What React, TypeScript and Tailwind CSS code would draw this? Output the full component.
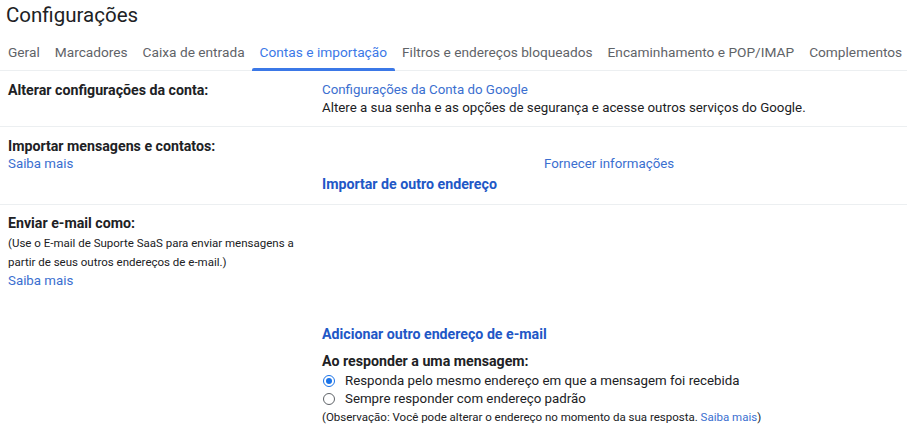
import React from "react";

const tabs = [
  "Geral",
  "Marcadores",
  "Caixa de entrada",
  "Contas e importação",
  "Filtros e endereços bloqueados",
  "Encaminhamento e POP/IMAP",
  "Complementos",
];

function Radio({ checked }: { checked: boolean }) {
  return (
    <span
      className={
        "inline-flex shrink-0 items-center justify-center w-[12px] h-[12px] rounded-full border " +
        (checked ? "border-[#1a73e8]" : "border-[#5f6368]")
      }
    >
      {checked && <span className="w-[6px] h-[6px] rounded-full bg-[#1a73e8]" />}
    </span>
  );
}

export default function App() {
  return (
    <div
      className="w-[907px] h-[427px] bg-white overflow-hidden text-[#202124]"
      style={{ fontFamily: "Roboto, 'Noto Sans', Arial, sans-serif" }}
    >
      <div className="pl-[6px] pt-[1px] h-[38px] text-[20.5px] leading-[28px] text-[#202124] font-normal whitespace-nowrap">
        Configurações
      </div>
      <div className="flex pl-[0.5px] h-[33px] border-b border-[#eceff1] whitespace-nowrap">
        {tabs.map((t) => {
          const active = t === "Contas e importação";
          return (
            <div
              key={t}
              className={
                "shrink-0 px-[7.5px] pt-[5px] text-[13.7px] leading-[18px] relative " +
                (active ? "text-[#3b78e7]" : "text-[#5f6368]")
              }
            >
              {t}
              {active && (
                <span className="absolute left-0 right-0 bottom-[-1px] h-[3px] rounded-t-[2px] bg-[#3b78e7]" />
              )}
            </div>
          );
        })}
      </div>

      {/* Row 1 */}
      <div className="flex border-b border-[#eceff1] pt-[10px] pb-[9px] text-[13.3px] leading-[18px] whitespace-nowrap">
        <div className="w-[322px] pl-[8px] font-bold text-[14.2px] text-[#202124]">Alterar configurações da conta:</div>
        <div className="flex flex-col">
          <span className="text-[#3b6fd0]">Configurações da Conta do Google</span>
          <span className="text-[#202124]">
            Altere a sua senha e as opções de segurança e acesse outros serviços do Google.
          </span>
        </div>
      </div>

      {/* Row 2 */}
      <div className="flex border-b border-[#eceff1] pt-[10px] pb-[10px] text-[13.3px] leading-[18px] whitespace-nowrap">
        <div className="w-[322px] pl-[8px] flex flex-col">
          <span className="font-bold text-[14.2px] text-[#202124]">Importar mensagens e contatos:</span>
          <span className="text-[#3b6fd0]">Saiba mais</span>
        </div>
        <div className="flex flex-col pt-[18px]">
          <span className="pl-[222px] text-[#3b6fd0]">Fornecer informações</span>
          <span className="font-bold text-[14.2px] text-[#2157c6] leading-[20px] mt-[1px]">
            Importar de outro endereço
          </span>
        </div>
      </div>

      {/* Row 3 */}
      <div className="flex pt-[9px] text-[13.3px] leading-[18px] whitespace-nowrap">
        <div className="w-[322px] pl-[8px] flex flex-col">
          <span className="font-bold text-[14.2px] text-[#202124]">Enviar e-mail como:</span>
          <span className="text-[11.5px] leading-[19px] text-[#202124] mt-[2px]">
            (Use o E-mail de Suporte SaaS para enviar mensagens a
            <br />
            partir de seus outros endereços de e-mail.)
          </span>
          <span className="text-[#3b6fd0]">Saiba mais</span>
        </div>
        <div className="flex flex-col pt-[111px]">
          <span className="font-bold text-[14.2px] text-[#2157c6]">Adicionar outro endereço de e-mail</span>
          <span className="font-bold text-[14.2px] text-[#202124] mt-[9px]">Ao responder a uma mensagem:</span>
          <label className="flex items-center gap-[10px] mt-[2px] pl-[1px]">
            <Radio checked />
            <span>Responda pelo mesmo endereço em que a mensagem foi recebida</span>
          </label>
          <label className="flex items-center gap-[10px] pl-[1px]">
            <Radio checked={false} />
            <span>Sempre responder com endereço padrão</span>
          </label>
          <span className="text-[11.5px] leading-[18px] text-[#202124]">
            (Observação: Você pode alterar o endereço no momento da sua resposta.{" "}
            <span className="text-[#3b6fd0]">Saiba mais</span>)
          </span>
        </div>
      </div>
    </div>
  );
}
